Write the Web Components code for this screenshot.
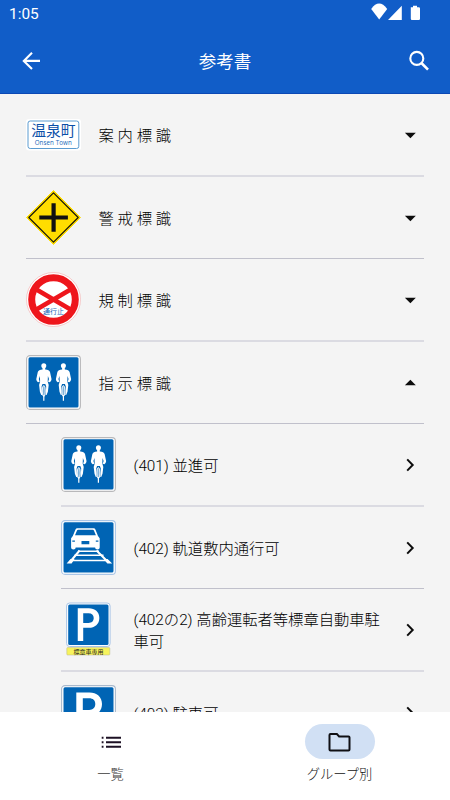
<!DOCTYPE html>
<html lang="ja">
<head>
<meta charset="utf-8">
<title>参考書</title>
<style>
html,body{margin:0;height:100%;overflow:hidden;background:#f4f4f4}
body{font-family:Roboto,"Noto Sans CJK JP",sans-serif;color:#111}
</style>
</head>
<body>
<guide-app></guide-app>
<script>
const define = (name, html) => customElements.define(name, class extends HTMLElement {
  constructor() {
    super();
    const t = document.createElement('template');
    t.innerHTML = typeof html === 'function' ? html(this) : html;
    this.attachShadow({mode: 'open'}).append(t.content.cloneNode(true));
  }
});

const rider = x => `<g transform="translate(${x} 0)" fill="#fff">
<circle cx="0" cy="10.8" r="2.5"/>
<path d="M-1.4 12.5h2.8v2c2.8.5 4.2.9 4.8 2.4l1.5 7.2c.1 1.200-.6 2.100-1.700 3.200l-1.700-.6.9-2.700-1.100-2.900-.2 5.400 1 3.600-.8 6.700-1.300 3.200h-.9l.5-8.500-.9-2.500h-2.800l-.9 2.500.5 8.500h-.9l-1.300-3.200-.8-6.700 1-3.600-.2-5.400-1.100 2.900.9 2.700-1.700.6c-1.100-1.100-1.800-2-1.700-3.200l1.500-7.200c.6-1.500 2-1.900 4.800-2.400z"/>
<ellipse cx="0" cy="36" rx="1.500" ry="5.500" fill="#7fb2da" stroke="#fff" stroke-width=".9"/>
<path d="M-.6 40h1.200v5.800h-1.200z"/></g>`;
const plate = (edge = '#b9bfc8') => `<rect x=".6" y=".6" width="53.8" height="53.8" rx="3.4" fill="#fff" stroke="${edge}" stroke-width="1.1"/><rect x="2.5" y="2.3" width="50" height="50.2" rx="1.5" fill="#0064b4"/>`;
const P = 'M15.3 7.5h13.2c7.200 0 12.500 4.200 12.500 11.600s-5.300 11.700-12.500 11.700h-6.700v15.700h-6.500zM21.800 13.300v11.700h6.400c3.700 0 6.100-2.200 6.100-5.900s-2.400-5.800-6.100-5.800z';
const signs = {
  town: `<rect x="0" y="12" width="55" height="31.500" rx="3" fill="#fff"/><rect x="2" y="14" width="50.8" height="27.5" rx="2.200" fill="#fff" stroke="#5b9bd0" stroke-width="1"/>
<text x="27.4" y="29.400" font-size="14.800" font-weight="400" text-anchor="middle" fill="#0b4fa8" font-family="Noto Sans CJK JP">温泉町</text>
<text x="27.2" y="38" font-size="6.200" font-weight="500" text-anchor="middle" fill="#1766b8" font-family="Open Sans" textLength="37">Onsen Town</text>`,
  cross: `<path d="M27.5.5 54.500 27.500 27.500 54.500.5 27.500z" fill="#fd0" stroke="#fd0" stroke-linejoin="round"/><path d="M27.500 2.800 52.200 27.500 27.500 52.200 2.800 27.500z" fill="#fd0" stroke="#17150a" stroke-width="1.200" stroke-linejoin="round"/><path d="M25.500 13.200h4.200v12.200h12.200v4.200h-12.200v12.200h-4.200v-12.200h-12.200v-4.200h12.200z" fill="#111"/>`,
  stop: `<circle cx="27.500" cy="27.500" r="27" fill="#fff" stroke="#f3a9a9" stroke-width=".6"/><circle cx="27.500" cy="27.500" r="21.800" fill="#fff" stroke="#ee161c" stroke-width="7"/><path d="M10 17.300 45 37.700M45 17.300 10 37.700" stroke="#ee161c" stroke-width="4.600"/>
<rect x="17.500" y="36" width="20" height="6.800" fill="#fff"/><text x="27.500" y="42.300" font-size="7" text-anchor="middle" fill="#1766b8" font-family="Noto Sans CJK JP">通行止</text>`,
  bikes: plate('#b8b8ba') + rider(17.8) + rider(37.4),
  rail: plate('#a9c5e6') + `<path d="M14.500 9.500q.5-1.200 1.800-1.200h16.300q1.300 0 1.800 1.200l2.600 6.500 1.700 2.200v9.300q0 2-2.300 2t-2.300-2H14.700q0 2-2.300 2t-2.300-2v-9.300l1.700-2.200z" fill="#fff"/><path d="M16 10.600q.3-.9 1.200-.9h14.500q.9 0 1.200.9l2 4.700H14z" fill="#0064b4"/><path d="M11.300 20.500h2.600v1.300h-2.600zM34.800 20.500h2.600v1.300h-2.600zM20.500 21h7.800v3.200h-7.800z" fill="#0064b4"/>
<path d="M18.600 30.500 9 42M35.500 30.500 47 42" stroke="#fff" stroke-width="2" fill="none"/><path d="M17 31.200h21M13.500 35.300h29M10.200 40.500h36" stroke="#fff" stroke-width="1.400"/><path d="M5.600 43.500l4-4.500h4l-3 4.500zM51.200 43.500l-4.600-4.500h-4l3.800 4.500z" fill="#fff"/>`,
  permit: `<rect x="5.600" y="1" width="43.500" height="43.500" rx="3" fill="#fff" stroke="#a9c5e6"/><rect x="7.200" y="2.600" width="40.300" height="40.300" rx="1.500" fill="#0064b4"/><path transform="translate(3.900 0) scale(.84)" d="${P}" fill="#fff" fill-rule="evenodd"/>
<rect x="5.800" y="45.600" width="43" height="7.400" rx=".8" fill="#f7f35c" stroke="#b9b78a" stroke-width=".5"/><text x="27.500" y="51.500" font-size="6" text-anchor="middle" fill="#222" font-family="Noto Sans CJK JP">標章車専用</text>`,
  park: plate('#a9b9cc') + `<path d="${P}" fill="#fff" fill-rule="evenodd"/>`
};
define('sign-icon', el => `<style>:host{display:block;flex:none;width:55px;height:55px}svg{display:block}</style><svg width="55" height="55" viewBox="0 0 55 55">${signs[el.getAttribute('kind')]}</svg>`);

const marks = {
  down: '<path d="M6.900 9.700h10.900L12.400 15.200z" fill="#0c0c0c"/>',
  up: '<path d="M6.900 14.200h10.900L12.400 8.700z" fill="#0c0c0c"/>',
  next: '<path d="m9.200 6.400 5.500 5.600-5.500 5.600" fill="none" stroke="#0c0c0c" stroke-width="2"/>'
};
define('guide-row', el => `<style>
:host{display:flex;align-items:center;box-sizing:border-box;height:83px;padding:0 2px 0 0;border-bottom:2px solid #dbdbe2;margin:0 26px}
:host([sharp]){height:82px;border-bottom:1px solid #c0c0cb}
:host([sub]){margin-left:61px}
.t{flex:1;min-width:0;margin-left:17.500px;padding-top:3px;font-size:15.300px;line-height:22px;font-weight:300;letter-spacing:3.800px;color:#000}
:host([sub]) .t{letter-spacing:0;margin-right:14px}
svg{flex:none;display:block}
</style><sign-icon kind="${el.getAttribute('sign')}"></sign-icon><div class="t"><slot></slot></div><svg width="24" height="24">${marks[el.getAttribute('mark')]}</svg>`);

define('status-bar', `<style>
:host{display:flex;justify-content:space-between;height:28px;padding:0 29px 0 9px;color:#fff;font-size:15.400px;line-height:29px}
svg{display:block}</style><span>1:05</span>
<svg width="50" height="28" fill="#fff"><path d="M.2 7.500Q8-3.300 16.200 7.500L8.200 18z" transform="translate(0 1.500)"/><path d="M17 20L30.800 5.700V20zM40 7.200h2V5.800h4v1.400h1.800q1.200 0 1.200 1.200v10.400q0 1.200-1.200 1.200h-6.800q-1.200 0-1.200-1.200V7.200z"/></svg>`);

define('app-bar', `<style>
:host{display:block;box-sizing:border-box;height:94px;background:#115dc8;border-bottom:1px solid #0b48b4;color:#fff}
nav{display:flex;align-items:center;justify-content:space-between;height:65px;padding:0 18px 0 18px}
h1{margin:0;padding-top:2px;font-size:17.500px;font-weight:400;line-height:26px}
svg{display:block}</style><status-bar></status-bar><nav>
<svg width="26" height="26" viewBox="0 0 26 26" fill="none" stroke="#fff" stroke-width="2.100"><path d="M22 12.900H6M14 4.700 5.800 12.900l8.200 8.200"/></svg>
<h1><slot></slot></h1>
<svg width="26" height="26" viewBox="0 0 26 26" fill="none" stroke="#fff" stroke-width="2.100"><circle cx="10.800" cy="10.400" r="6.500"/><path d="m15.400 15 6.600 6.600" stroke-width="2.600"/></svg></nav>`);

const tabs = {
  list: '<g fill="#1d1124"><path d="M10 6.700h15v2h-15zM10 11.200h15v2h-15zM10 15.700h15v2h-15z"/><path d="M5.700 6.700h1.800v2H5.700zM5.700 11.200h1.800v2H5.700zM5.700 15.700h1.800v2H5.700z"/></g>',
  folder: '<path d="M5.500 4.100h6.400l2.200 2.300h9.400q1 0 1 1v12q0 1-1 1h-18q-1 0-1-1V5.100q0-1 1-1z" fill="none" stroke="#101014" stroke-width="2"/>'
};
define('nav-tab', el => `<style>
:host{flex:1;display:flex;flex-direction:column;align-items:center;padding-top:12px;color:#3c3c3c}
.pill{display:flex;align-items:center;justify-content:center;width:70px;height:35px;border-radius:18px}
:host([active]) .pill{background:#d1e0f4}
:host([active]){color:#111}
.l{margin-top:6px;font-size:13.300px;line-height:20px;font-weight:300}
</style><div class="pill"><svg width="30" height="24">${tabs[el.getAttribute('icon')]}</svg></div><div class="l"><slot></slot></div>`);

define('bottom-nav', `<style>:host{display:flex;gap:8px;height:88px;background:#fff}</style><slot></slot>`);

define('guide-app', `<style>
:host{display:flex;flex-direction:column;width:450px;height:800px;background:#f4f4f4}
main{flex:1;min-height:0;overflow:hidden}
</style><app-bar>参考書</app-bar><main>
<guide-row sign="town" mark="down">案内標識</guide-row>
<guide-row sharp sign="cross" mark="down">警戒標識</guide-row>
<guide-row sign="stop" mark="down">規制標識</guide-row>
<guide-row sharp sign="bikes" mark="up">指示標識</guide-row>
<guide-row sub sign="bikes" mark="next">(401) 並進可</guide-row>
<guide-row sub sharp sign="rail" mark="next">(402) 軌道敷内通行可</guide-row>
<guide-row sub sign="permit" mark="next">(402の2) 高齢運転者等標章自動車駐車可</guide-row>
<guide-row sub sharp sign="park" mark="next">(403) 駐車可</guide-row>
</main><bottom-nav><nav-tab icon="list">一覧</nav-tab><nav-tab active icon="folder">グループ別</nav-tab></bottom-nav>`);
</script>
</body>
</html>
